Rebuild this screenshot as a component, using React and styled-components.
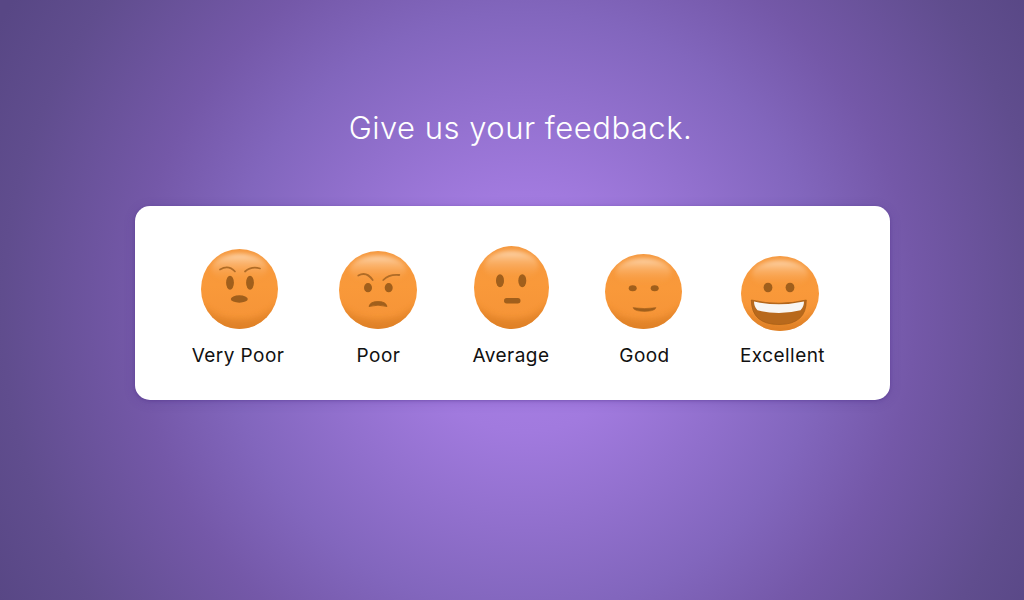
import React from "react";
import styled, { createGlobalStyle } from "styled-components";

const Global = createGlobalStyle`
  html, body { margin: 0; padding: 0; height: 100%; }
  #root { height: 100%; }
`;

const Page = styled.main`
  width: 1024px;
  height: 600px;
  overflow: hidden;
  display: flex;
  flex-direction: column;
  align-items: center;
  padding-top: 106px;
  box-sizing: border-box;
  font-family: "Inter", "Liberation Sans", sans-serif;
  background: radial-gradient(circle 600px at 525px 312px, #ab81e8 0%, #a17ade 20%, #8266bd 50%, #7458a8 65%, #604d8e 87%, #584785 100%);
`;

const Title = styled.h1`
  margin: 0 0 56px 17px;
  font-size: 31px;
  line-height: 44px;
  font-weight: 300;
  letter-spacing: 0.5px;
  color: #fff;
`;

const Card = styled.section`
  width: 755px;
  height: 194px;
  box-sizing: border-box;
  background: #fff;
  border-radius: 15px;
  box-shadow: 0 1px 3px rgba(70, 40, 130, 0.35), 0 2px 12px rgba(70, 40, 130, 0.2);
  display: flex;
  align-items: flex-start;
  gap: 55px;
  padding: 0 0 0 57px;
`;

const Option = styled.button`
  all: unset;
  width: ${(p) => p.$width}px;
  height: 100%;
  display: flex;
  flex-direction: column;
  align-items: center;
  padding-top: ${(p) => p.$top}px;
  box-sizing: border-box;
`;

const FaceSlot = styled.span`
  display: block;
  margin-left: ${(p) => p.$shift || 0}px;
`;

const Label = styled.span`
  margin-top: ${(p) => p.$gap}px;
  margin-left: ${(p) => p.$shift || 0}px;
  font-size: 19px;
  line-height: 24px;
  font-weight: 400;
  letter-spacing: 0.45px;
  color: #111;
  white-space: nowrap;
`;

const Face = ({ id, w, h, children }) => (
  <svg width={w} height={h} viewBox={`0 0 ${w} ${h}`} style={{ display: "block" }}>
    <defs>
      <linearGradient id={`${id}b`} x1="0" y1="0" x2="0" y2="1">
        <stop offset="0%" stopColor="#f5983e" />
        <stop offset="45%" stopColor="#f9993a" />
        <stop offset="82%" stopColor="#f69538" />
        <stop offset="100%" stopColor="#e88a2e" />
      </linearGradient>
      <linearGradient id={`${id}s`} x1="0" y1="0" x2="0" y2="1">
        <stop offset="0%" stopColor="#ffe8cf" stopOpacity="0.8" />
        <stop offset="30%" stopColor="#ffd2a4" stopOpacity="0.5" />
        <stop offset="100%" stopColor="#f9993a" stopOpacity="0" />
      </linearGradient>
      <filter id={`${id}f`} x="-20%" y="-20%" width="140%" height="140%">
        <feGaussianBlur stdDeviation="2" />
      </filter>
      <filter id={`${id}h`} x="-20%" y="-30%" width="140%" height="160%">
        <feGaussianBlur stdDeviation="3" />
      </filter>
      <filter id={`${id}k`} x="-20%" y="-40%" width="140%" height="180%">
        <feGaussianBlur stdDeviation="0.35" />
      </filter>
      <clipPath id={`${id}c`}>
        <ellipse cx={w / 2} cy={h / 2} rx={w / 2} ry={h / 2} />
      </clipPath>
    </defs>
    <ellipse cx={w / 2} cy={h / 2} rx={w / 2} ry={h / 2} fill={`url(#${id}b)`} />
    <g clipPath={`url(#${id}c)`}>
      <path
        d={`M${-w * 0.02} ${h * 0.68} Q${w / 2} ${h * 1.1} ${w * 1.02} ${h * 0.68} V${h * 1.1} H${-w * 0.02}Z`}
        fill="#d97c22"
        opacity="0.6"
        filter={`url(#${id}h)`}
      />
      <ellipse
        cx={w / 2}
        cy={h * 0.24}
        rx={w * 0.36}
        ry={h * 0.18}
        fill={`url(#${id}s)`}
        filter={`url(#${id}f)`}
      />
    </g>
    <g filter={`url(#${id}k)`}>{children}</g>
  </svg>
);

const ink = "#a05e1b";
const brow = "#b06c28";

const faces = {
  veryPoor: (
    <Face id="vp" w={77} h={80}>
      <ellipse cx="29" cy="33.7" rx="3.9" ry="7" fill={ink} />
      <ellipse cx="49" cy="33.7" rx="3.9" ry="7" fill={ink} />
      <ellipse cx="38.3" cy="50" rx="8.5" ry="3.7" fill={ink} />
      <path d="M19 20.5Q27.5 15.5 34 22.5" fill="none" stroke={brow} strokeWidth="1.7" strokeLinecap="round" />
      <path d="M44 22.5Q50.5 17 59 19.5" fill="none" stroke={brow} strokeWidth="1.7" strokeLinecap="round" />
    </Face>
  ),
  poor: (
    <Face id="p" w={78} h={78}>
      <ellipse cx="29" cy="36.7" rx="4" ry="4.6" fill={ink} />
      <ellipse cx="49.7" cy="36.7" rx="4" ry="4.6" fill={ink} />
      <path d="M30 55.5Q31 50.5 39 50.5Q47 50.5 48 55.5Q39 52.8 30 55.5Z" fill={ink} stroke={ink} strokeWidth="0.8" strokeLinejoin="round" />
      <path d="M19.3 24.5Q27.5 20 33.7 29" fill="none" stroke={brow} strokeWidth="1.8" strokeLinecap="round" />
      <path d="M44.3 29Q50 23 60.3 24" fill="none" stroke={brow} strokeWidth="1.8" strokeLinecap="round" />
    </Face>
  ),
  average: (
    <Face id="a" w={75} h={83}>
      <ellipse cx="26" cy="34.7" rx="4" ry="6.5" fill={ink} />
      <ellipse cx="48.3" cy="34.7" rx="4" ry="6.5" fill={ink} />
      <rect x="30" y="52" width="16.5" height="5.4" rx="2.7" fill={ink} />
    </Face>
  ),
  good: (
    <Face id="g" w={77} h={75}>
      <ellipse cx="27.7" cy="34.3" rx="4" ry="3" fill={ink} />
      <ellipse cx="49.7" cy="34.3" rx="4" ry="3" fill={ink} />
      <path d="M28 53.6Q39.5 55.6 51 53.6Q50 57.4 39.5 57.4Q29 57.4 28 53.6Z" fill={ink} stroke={ink} strokeWidth="0.5" strokeLinejoin="round" />
    </Face>
  ),
  excellent: (
    <Face id="e" w={78} h={75}>
      <ellipse cx="27" cy="31.5" rx="4.4" ry="4.8" fill={ink} />
      <ellipse cx="49" cy="31.5" rx="4.4" ry="4.8" fill={ink} />
      <path d="M10.3 44Q38 50.5 65.3 44Q65.5 68.5 38 68.5Q10.5 68.5 10.3 44Z" fill="#b8691d" stroke="#a35b14" strokeWidth="0.7" strokeLinejoin="round" />
      <path d="M13 45.6Q38 51 63 45.6Q63 51 59.5 54.3Q38 59.8 16.5 54.3Q13 51 13 45.6Z" fill="#f8f6f3" />
    </Face>
  ),
};

const options = [
  { label: "Very Poor", face: "veryPoor", width: 92, top: 43, gap: 15, shift: 3, labelShift: 1 },
  { label: "Poor", face: "poor", width: 78, top: 45, gap: 15, labelShift: 2 },
  { label: "Average", face: "average", width: 78, top: 40, gap: 15, shift: 1, labelShift: 1 },
  { label: "Good", face: "good", width: 78, top: 48, gap: 15, labelShift: 2 },
  { label: "Excellent", face: "excellent", width: 87, top: 50, gap: 13, shift: -2, labelShift: 3 },
];

export default function App() {
  return (
    <Page>
      <Global />
      <Title>Give us your feedback.</Title>
      <Card>
        {options.map((o) => (
          <Option key={o.label} $width={o.width} $top={o.top}>
            <FaceSlot $shift={o.shift}>{faces[o.face]}</FaceSlot>
            <Label $gap={o.gap} $shift={o.labelShift}>{o.label}</Label>
          </Option>
        ))}
      </Card>
    </Page>
  );
}
